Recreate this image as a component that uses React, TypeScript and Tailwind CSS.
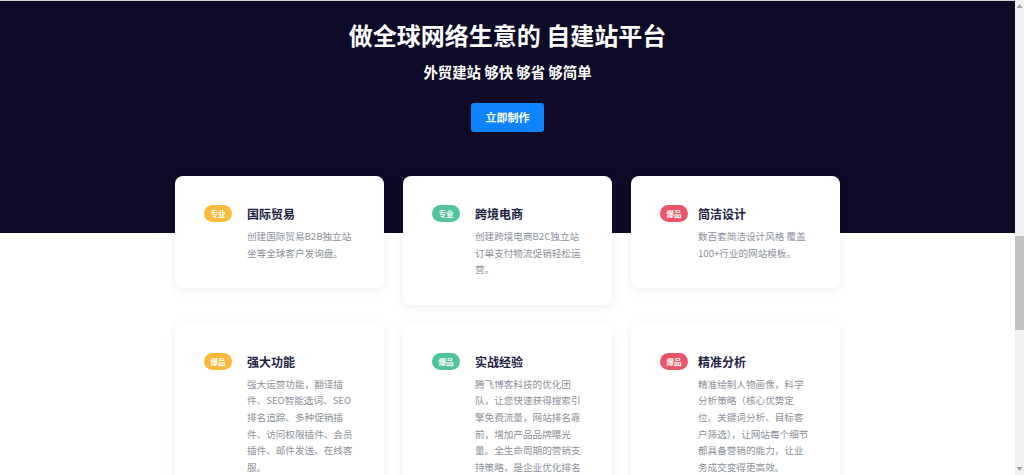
import React from "react";

type Card = { badge: string; color: string; title: string; desc: string };

const cards: Card[] = [
  { badge: "专业", color: "bg-[#fbb93a]", title: "国际贸易", desc: "创建国际贸易B2B独立站坐等全球客户发询盘。" },
  { badge: "专业", color: "bg-[#50c49d]", title: "跨境电商", desc: "创建跨境电商B2C独立站订单支付物流促销轻松运营。" },
  { badge: "爆品", color: "bg-[#ea5369]", title: "简洁设计", desc: "数百套简洁设计风格 覆盖100+行业的网站模板。" },
  { badge: "爆品", color: "bg-[#fbb93a]", title: "强大功能", desc: "强大运营功能，翻译插件、SEO智能选词、SEO排名追踪、多种促销插件、访问权限插件、会员插件、邮件发送、在线客服。" },
  { badge: "爆品", color: "bg-[#50c49d]", title: "实战经验", desc: "腾飞博客科技的优化团队，让您快速获得搜索引擎免费流量，网站排名靠前，增加产品品牌曝光量。全生命周期的营销支持策略，是企业优化排名的最佳选择。" },
  { badge: "爆品", color: "bg-[#ea5369]", title: "精准分析", desc: "精准绘制人物画像，科学分析策略（核心优势定位、关键词分析、目标客户筛选），让网站每个细节都具备营销的能力，让业务成交变得更高效。" },
];

export default function App() {
  return (
    <div className="flex h-[475px] w-[1024px] overflow-hidden bg-white font-['Noto_Sans_CJK_SC','Noto_Sans',sans-serif]">
      <main className="flex-1 overflow-hidden border-t border-[#cfcfd4] bg-[linear-gradient(to_bottom,#0e0b28_232px,#ffffff_232px)]">
        <div className="flex flex-col items-center pt-[18px]">
          <h1 className="text-[24px] font-bold leading-[32px] text-white">做全球网络生意的 自建站平台</h1>
          <p className="mt-[11px] text-[14.4px] font-bold leading-[20px] text-white">外贸建站 够快 够省 够简单</p>
          <button className="mt-[21px] flex h-[29px] w-[73px] items-center justify-center rounded-[3px] bg-[#0d84fb] text-[11px] font-bold text-white">
            立即制作
          </button>
        </div>
        <div className="mx-auto mt-[44px] grid w-[665px] grid-cols-3 items-start gap-[19px]">
          {cards.map((c, i) => (
            <div
              key={i}
              className="flex rounded-[8px] bg-white pb-[27px] pl-[29px] pt-[29px] shadow-[0_2px_12px_rgba(20,20,60,0.07)]"
            >
              <span
                className={`${c.color} flex h-[17px] w-[28px] shrink-0 items-center justify-center rounded-full text-[7.5px] font-bold text-white`}
              >
                {c.badge}
              </span>
              <div className={`${i % 3 === 2 ? "ml-[10px]" : "ml-[15px]"} w-[112px]`}>
                <div className="text-[12px] font-bold leading-[17px] text-[#1c2244]">{c.title}</div>
                <p className="mt-[6px] text-[9.6px] leading-[16.6px] text-[#8c9099]">{c.desc}</p>
              </div>
            </div>
          ))}
        </div>
      </main>
      <div className="flex w-[9px] flex-col items-center bg-[#f1f1f1]">
        <svg width="7" height="6" viewBox="0 0 7 6" className="mt-[3px]">
          <path d="M3.5 1 L6.5 5 L0.5 5 Z" fill="#a3a3a3" />
        </svg>
        <div className="mt-[227px] h-[94px] w-full bg-[#c1c1c1]" />
        <div className="flex-1" />
        <svg width="7" height="6" viewBox="0 0 7 6" className="mb-[3px]">
          <path d="M0.5 1 L6.5 1 L3.5 5 Z" fill="#a3a3a3" />
        </svg>
      </div>
    </div>
  );
}
